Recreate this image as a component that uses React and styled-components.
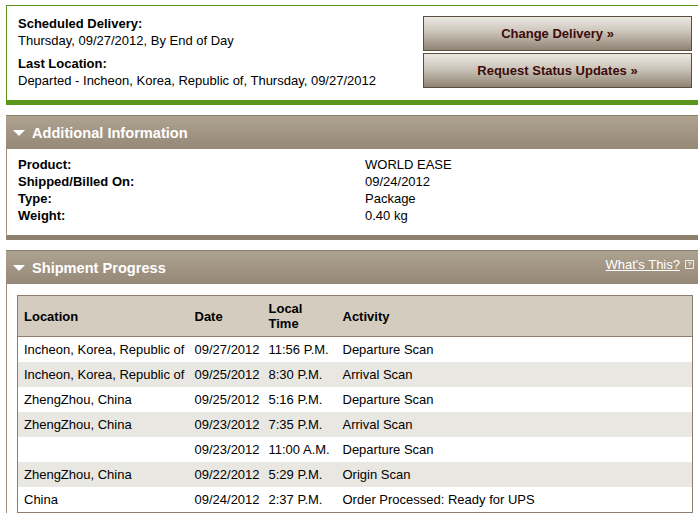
import React from 'react'
import styled, { createGlobalStyle } from 'styled-components'

const GlobalStyle = createGlobalStyle`
  html, body {
    margin: 0;
    padding: 0;
    background: #fff;
    overflow: hidden;
  }
  body {
    font-family: "Liberation Sans", Arial, Helvetica, sans-serif;
    font-size: 13px;
    color: #000;
  }
`

const details = [
  { label: 'Product:', value: 'WORLD EASE' },
  { label: 'Shipped/Billed On:', value: '09/24/2012' },
  { label: 'Type:', value: 'Package' },
  { label: 'Weight:', value: '0.40 kg' },
]

const progress = [
  { location: 'Incheon, Korea, Republic of', date: '09/27/2012', time: '11:56 P.M.', activity: 'Departure Scan' },
  { location: 'Incheon, Korea, Republic of', date: '09/25/2012', time: '8:30 P.M.', activity: 'Arrival Scan' },
  { location: 'ZhengZhou, China', date: '09/25/2012', time: '5:16 P.M.', activity: 'Departure Scan' },
  { location: 'ZhengZhou, China', date: '09/23/2012', time: '7:35 P.M.', activity: 'Arrival Scan' },
  { location: '', date: '09/23/2012', time: '11:00 A.M.', activity: 'Departure Scan' },
  { location: 'ZhengZhou, China', date: '09/22/2012', time: '5:29 P.M.', activity: 'Origin Scan' },
  { location: 'China', date: '09/24/2012', time: '2:37 P.M.', activity: 'Order Processed: Ready for UPS' },
]

export default function App() {
  return (
    <>
      <GlobalStyle />
      <Page>
        <DeliveryBox>
          <Summary>
            <Field>
              <Label>Scheduled Delivery:</Label>
              <div>Thursday, 09/27/2012, By End of Day</div>
            </Field>
            <Field>
              <Label>Last Location:</Label>
              <div>Departed - Incheon, Korea, Republic of, Thursday, 09/27/2012</div>
            </Field>
          </Summary>
          <Actions>
            <ActionButton>Change Delivery »</ActionButton>
            <ActionButton>Request Status Updates »</ActionButton>
          </Actions>
        </DeliveryBox>

        <Section>
          <SectionHeader>
            <Title><Caret />Additional Information</Title>
          </SectionHeader>
          <DetailBody>
            {details.map((d) => (
              <DetailRow key={d.label}>
                <Label>{d.label}</Label>
                <span>{d.value}</span>
              </DetailRow>
            ))}
          </DetailBody>
        </Section>

        <Section $open>
          <SectionHeader>
            <Title><Caret />Shipment Progress</Title>
            <HelpLink>
              <a>What's This?</a>
              <HelpIcon>?</HelpIcon>
            </HelpLink>
          </SectionHeader>
          <TableWrap>
            <Table>
              <colgroup>
                <col style={{ width: 171 }} />
                <col style={{ width: 74 }} />
                <col style={{ width: 74 }} />
                <col />
              </colgroup>
              <thead>
                <tr>
                  <Th>Location</Th>
                  <Th>Date</Th>
                  <Th>Local<br />Time</Th>
                  <Th>Activity</Th>
                </tr>
              </thead>
              <tbody>
                {progress.map((p, i) => (
                  <Row key={i} $alt={i % 2 === 1}>
                    <Td>{p.location}</Td>
                    <Td>{p.date}</Td>
                    <Td>{p.time}</Td>
                    <Td>{p.activity}</Td>
                  </Row>
                ))}
              </tbody>
            </Table>
          </TableWrap>
        </Section>
      </Page>
    </>
  )
}

const Page = styled.div`
  width: 692px;
  padding: 5px 0 0 6px;
`

const DeliveryBox = styled.div`
  display: flex;
  justify-content: space-between;
  border-top: 1px solid #5a961c;
  border-left: 1px solid #5a961c;
  border-bottom: 5px solid #5a961c;
  height: 94px;
`

const Summary = styled.div`
  padding: 10px 0 0 11px;
  display: flex;
  flex-direction: column;
  gap: 7px;
  line-height: 16.5px;
`

const Field = styled.div``

const Label = styled.div`
  font-weight: bold;
`

const Actions = styled.div`
  display: flex;
  flex-direction: column;
  gap: 2px;
  padding-top: 10px;
  width: 269px;
  margin-right: 6px;
`

const ActionButton = styled.button`
  height: 35px;
  width: 269px;
  border: 1px solid #5c4d3c;
  background: linear-gradient(to bottom, #ebe8e3 0%, #cbc4b9 45%, #8f8474 100%);
  color: #3d0b0b;
  font-family: "Liberation Sans", Arial, sans-serif;
  font-weight: bold;
  font-size: 13px;
  padding: 0;
  cursor: pointer;
`

const Section = styled.div`
  margin-top: 10px;
  border-left: 1px solid #9a8f80;
  border-bottom: ${(p) => (p.$open ? 'none' : '5px solid #8c806f')};
`

const SectionHeader = styled.div`
  height: 33px;
  border-top: 1px solid #8b7f6e;
  background: linear-gradient(to bottom, #aea290 0%, #958876 100%);
  display: flex;
  align-items: center;
  justify-content: space-between;
  padding: 0 4px 0 6px;
  margin-left: -1px;
`

const Title = styled.div`
  display: flex;
  align-items: center;
  color: #fff;
  font-weight: bold;
  font-size: 14.6px;
  gap: 7px;
  padding-top: 1px;
`

const Caret = styled.span`
  width: 0;
  height: 0;
  border-left: 6px solid transparent;
  border-right: 6px solid transparent;
  border-top: 6px solid #fff;
  margin-left: 1px;
`

const HelpLink = styled.div`
  display: flex;
  align-items: center;
  gap: 5px;
  align-self: flex-start;
  margin-top: 6px;
  a {
    color: #fff;
    text-decoration: underline;
    font-size: 13px;
  }
`

const HelpIcon = styled.span`
  width: 7px;
  height: 7px;
  border: 1px solid #f0ece6;
  color: #f0ece6;
  font-size: 6px;
  line-height: 7px;
  text-align: center;
  font-weight: bold;
`

const DetailBody = styled.div`
  padding: 7px 0 11px 11px;
  line-height: 17px;
`

const DetailRow = styled.div`
  display: grid;
  grid-template-columns: 347px auto;
`

const TableWrap = styled.div`
  padding: 11px 5px 0 10px;
`

const Table = styled.table`
  width: 100%;
  table-layout: fixed;
  border-collapse: collapse;
  border: 1px solid #8c7f6d;
  font-size: 13px;
`

const Th = styled.th`
  background: #d4cdbf;
  text-align: left;
  font-weight: bold;
  height: 40px;
  padding: 0 6px;
  line-height: 15px;
  border-bottom: 1px solid #8c7f6d;
`

const Row = styled.tr`
  background: ${(p) => (p.$alt ? '#e9e7e1' : '#fff')};
`

const Td = styled.td`
  height: 25px;
  padding: 0 6px;
  white-space: nowrap;
`
